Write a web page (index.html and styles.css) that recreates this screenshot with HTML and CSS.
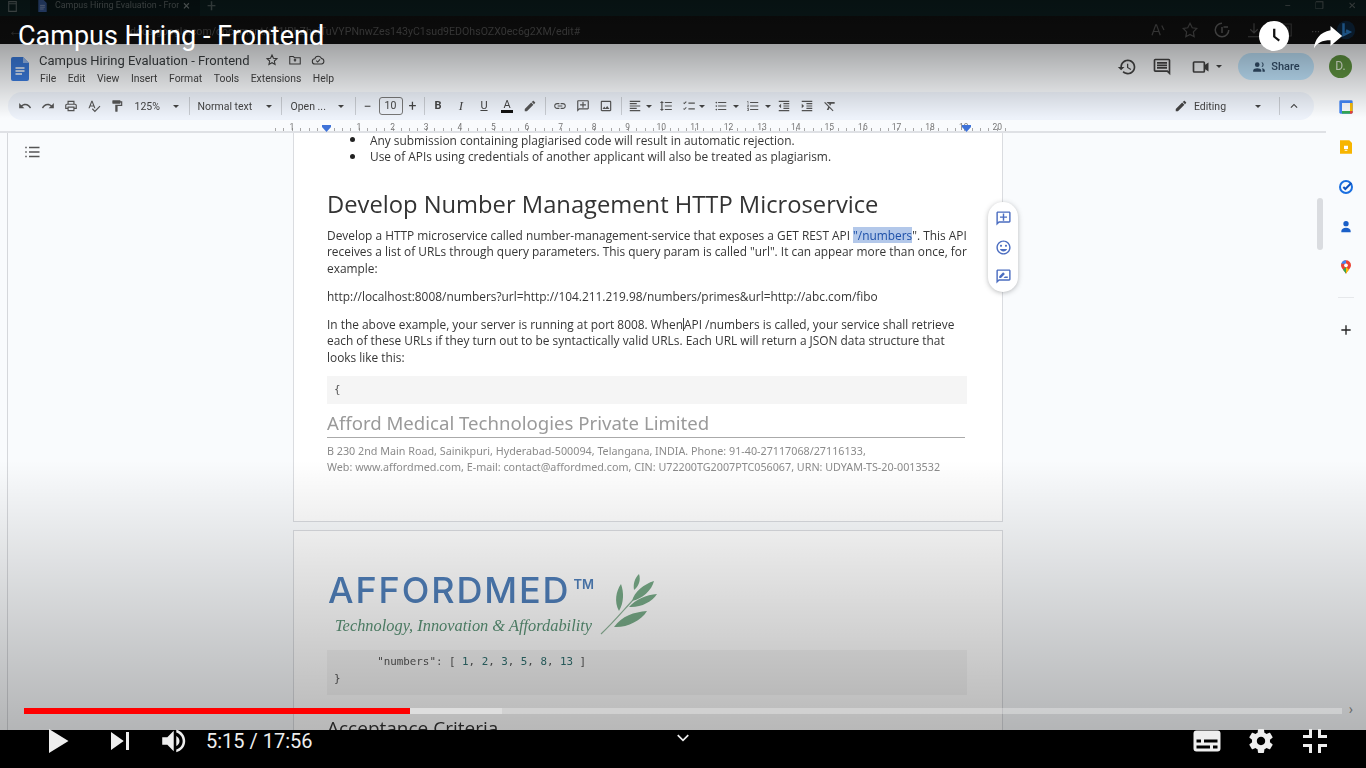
FILE: index.html
```html
<!DOCTYPE html>
<html lang="en">
<head>
<meta charset="utf-8">
<title>Campus Hiring - Frontend</title>
<link rel="stylesheet" href="styles.css">
</head>
<body>
<div class="player">
  <div class="video">
    <div class="tabstrip">
      <svg class="ws" viewBox="0 0 24 24"><path d="M5 3h14v18H5zM5 7h14" fill="none" stroke="#6b7777" stroke-width="2"/></svg>
      <div class="tab">
        <svg class="tabdoc" viewBox="0 0 16 20"><path d="M1 0h9l5 5v15H1z" fill="#3d63a8"/><path d="M4 9h8M4 12h8M4 15h6" stroke="#cfd9ee"/></svg>
        <span class="tabtext">Campus Hiring Evaluation - Fron</span>
        <span class="tabx">×</span>
      </div>
      <span class="tabplus">+</span>
      <div class="winctl"><span>–</span><span>❐</span><span>✕</span></div>
    </div>
    <div class="addr">
      <span class="addrnav">←</span>
      <span class="url">docs.google.com/document/d/1IRhZheiTuVYPNnwZes143yC1sud9EDOhsOZX0ec6g2XM/edit#</span>
      <div class="addricons">
        <svg viewBox="0 0 24 24"><path d="M4 19 9 5h1l5 14M6 14h7M17 6l3 6" fill="none" stroke="#555" stroke-width="1.6"/></svg>
        <svg viewBox="0 0 24 24"><path d="m12 3 3 6 6 1-4.500 4.500L17.500 21 12 18l-5.500 3 1-6.500L3 10l6-1z" fill="none" stroke="#555" stroke-width="1.600"/></svg>
        <svg viewBox="0 0 24 24"><path d="M12 3a9 9 0 1 0 9 9M14 8h6M12 8v8" fill="none" stroke="#666" stroke-width="2"/></svg>
        <svg viewBox="0 0 24 24"><path d="M12 3v12M7 11l5 5 5-5M4 21h16" fill="none" stroke="#555" stroke-width="1.600"/></svg>
        <svg viewBox="0 0 24 24"><path d="M5 4h14v16H5zM9 8h6v6H9z" fill="none" stroke="#444" stroke-width="1.600"/></svg>
      </div>
      <span class="addrmore">···</span>
      <svg class="bing" viewBox="0 0 24 24"><circle cx="12" cy="12" r="11" fill="#0f2a44"/><path d="M9 4v14l7-3.500-4-2 " fill="none" stroke="#2f86d6" stroke-width="3"/></svg>
    </div>

    <div class="docs">
      <div class="dochead">
        <svg class="doclogo" viewBox="0 0 18 24"><path d="M2 0h10l6 6v16a2 2 0 0 1-2 2H2a2 2 0 0 1-2-2V2a2 2 0 0 1 2-2z" fill="#3b7de0"/><path d="M12 0l6 6h-6z" fill="#9cc0f5"/><path d="M4.500 11h9M4.500 14h9M4.500 17h6.500" stroke="#fff" stroke-width="1.400"/></svg>
        <div class="docmeta">
          <div class="doctitlerow">
            <span class="doctitle">Campus Hiring Evaluation - Frontend</span>
            <svg class="i15 first" viewBox="0 0 24 24"><path d="m12 3.500 2.500 5.600 6 .6-4.500 4 1.300 6L12 16.600 6.700 19.700l1.300-6-4.500-4 6-.6z" fill="none" stroke="#444" stroke-width="1.800"/></svg>
            <svg class="i15" viewBox="0 0 24 24"><path d="M3 6h6l2 2h10v11H3zM12 15v-4M10 12.500l2-2 2 2" fill="none" stroke="#444" stroke-width="1.800"/></svg>
            <svg class="i15" viewBox="0 0 24 24"><path d="M7 19a4.500 4.500 0 0 1-.5-9A6 6 0 0 1 18 9.500 4.800 4.800 0 0 1 18 19zM9 13l2.500 2.500L15.500 11" fill="none" stroke="#444" stroke-width="1.800"/></svg>
          </div>
          <div class="menu"><span>File</span><span>Edit</span><span>View</span><span>Insert</span><span>Format</span><span>Tools</span><span>Extensions</span><span>Help</span></div>
        </div>
        <div class="headright">
          <svg class="i20" viewBox="0 0 24 24"><path d="M13 3c-4.970 0-9 4.030-9 9H1l3.890 3.890.07.140L9 12H6c0-3.870 3.130-7 7-7s7 3.130 7 7-3.130 7-7 7c-1.930 0-3.680-.79-4.940-2.060l-1.420 1.420C8.270 19.990 10.510 21 13 21c4.970 0 9-4.030 9-9s-4.030-9-9-9zm-1 5v5l4.280 2.540.72-1.210-3.500-2.080V8H12z"/></svg>
          <svg class="i20 hcomment" viewBox="0 0 24 24"><path d="M21.990 4c0-1.100-.89-2-1.990-2H4c-1.100 0-2 .9-2 2v12c0 1.100.9 2 2 2h14l4 4-.01-18zM20 4v13.170L18.830 16H4V4h16zM6 12h12v2H6zm0-3h12v2H6zm0-3h12v2H6z"/></svg>
          <svg class="i20 hvideo" viewBox="0 0 24 24"><path d="M4 6h11a1 1 0 0 1 1 1v10a1 1 0 0 1-1 1H4a1 1 0 0 1-1-1V7a1 1 0 0 1 1-1z" fill="none" stroke="#444" stroke-width="2"/><path d="m16 10 5-3.500v11L16 14z"/></svg>
          <span class="caret hcaret"></span>
          <div class="share">
            <svg class="i14" viewBox="0 0 24 24"><path d="M9 12a4 4 0 1 0 0-8 4 4 0 0 0 0 8zm0 2c-3 0-7 1.500-7 4v2h14v-2c0-2.500-4-4-7-4zm7-2a4 4 0 0 0 0-8 5.500 5.500 0 0 1 0 8zm2 8h4v-2c0-2-2-3.200-5-3.800 1 1 1 2.500 1 5.800z" fill="#334f6b"/></svg>
            <span>Share</span>
          </div>
          <div class="avatar">D.</div>
        </div>
      </div>

      <div class="workspace">
        <div class="editor">
          <div class="toolbar">
            <span class="tb"><svg viewBox="0 0 24 24"><path d="M12.500 8c-2.650 0-5.050.99-6.900 2.600L2 7v9h9l-3.620-3.620c1.390-1.160 3.160-1.880 5.120-1.880 3.540 0 6.550 2.310 7.600 5.500l2.370-.78C21.080 11.030 17.150 8 12.500 8z"/></svg></span>
            <span class="tb"><svg viewBox="0 0 24 24"><path d="M18.400 10.600C16.550 8.990 14.150 8 11.500 8c-4.650 0-8.580 3.030-9.960 7.220L3.900 16c1.050-3.190 4.050-5.500 7.600-5.500 1.950 0 3.730.72 5.120 1.880L13 16h9V7l-3.600 3.600z"/></svg></span>
            <span class="tb"><svg viewBox="0 0 24 24"><path d="M19 8h-1V3H6v5H5c-1.660 0-3 1.340-3 3v6h4v4h12v-4h4v-6c0-1.660-1.340-3-3-3zM8 5h8v3H8V5zm8 12v2H8v-4h8v2zm2-2v-2H6v2H4v-4c0-.55.45-1 1-1h14c.55 0 1 .45 1 1v4h-2z"/></svg></span>
            <span class="tb"><svg viewBox="0 0 24 24"><path d="M12.450 16h2.090L9.430 3H7.570L2.460 16h2.090l1.120-3h5.640l1.140 3zm-6.020-5L8.500 5.480 10.570 11H6.430zm15.160.59l-8.090 8.090L9.830 16l-1.410 1.410 5.090 5.090L23 13l-1.410-1.410z"/></svg></span>
            <span class="tb"><svg viewBox="0 0 24 24"><path d="M18 4V3c0-.55-.45-1-1-1H5c-.55 0-1 .45-1 1v4c0 .55.45 1 1 1h12c.55 0 1-.45 1-1V6h1v4H9v11c0 .55.45 1 1 1h2c.55 0 1-.45 1-1v-9h8V4h-3z"/></svg></span>
            <span class="tbtext zoomval">125%</span><span class="caret c-zoom"></span><span class="sep s-zoom"></span>
            <span class="tbtext styleval">Normal text</span><span class="caret c-style"></span><span class="sep s-style"></span>
            <span class="tbtext fontval">Open ...</span><span class="caret c-font"></span><span class="sep s-font"></span>
            <span class="tbglyph minus">−</span><span class="sizebox">10</span><span class="tbglyph plus">+</span><span class="sep s-size"></span>
            <span class="tb"><b class="fmt">B</b></span>
            <span class="tb"><i class="fmt fi">I</i></span>
            <span class="tb"><span class="fmt fu">U</span></span>
            <span class="tb"><span class="fmt fa">A</span></span>
            <span class="tb"><svg viewBox="0 0 24 24"><path d="M3 17.250V21h3.750L17.810 9.940l-3.750-3.750L3 17.250zM20.710 7.040c.39-.39.39-1.020 0-1.410l-2.340-2.340c-.39-.39-1.020-.39-1.410 0l-1.830 1.830 3.750 3.750 1.830-1.830z"/></svg></span>
            <span class="sep s-text"></span>
            <span class="tb"><svg viewBox="0 0 24 24"><path d="M3.900 12c0-1.710 1.390-3.100 3.100-3.100h4V7H7c-2.760 0-5 2.240-5 5s2.240 5 5 5h4v-1.900H7c-1.710 0-3.100-1.390-3.100-3.100zM8 13h8v-2H8v2zm9-6h-4v1.900h4c1.710 0 3.100 1.390 3.100 3.100s-1.390 3.100-3.100 3.100h-4V17h4c2.760 0 5-2.240 5-5s-2.240-5-5-5z"/></svg></span>
            <span class="tb"><svg viewBox="0 0 24 24"><path d="M20 2H4c-1.100 0-2 .9-2 2v18l4-4h14c1.100 0 2-.9 2-2V4c0-1.100-.9-2-2-2zm0 14H5.200L4 17.200V4h16v12zM11 5h2v4h4v2h-4v4h-2v-4H7V9h4z"/></svg></span>
            <span class="tb"><svg viewBox="0 0 24 24"><path d="M19 3H5c-1.100 0-2 .9-2 2v14c0 1.100.9 2 2 2h14c1.100 0 2-.9 2-2V5c0-1.100-.9-2-2-2zm0 16H5V5h14v14zm-5-7l-3 3.720L9 13l-3 4h12z"/></svg></span>
            <span class="sep s-ins"></span>
            <span class="tb"><svg viewBox="0 0 24 24"><path d="M3 3h18v2H3zM3 7h12v2H3zM3 11h18v2H3zM3 15h12v2H3zM3 19h18v2H3z"/></svg></span><span class="caret c-align"></span>
            <span class="tb"><svg viewBox="0 0 24 24"><path d="M6 7h2.500L5 3.500 1.500 7H4v10H1.500L5 20.500 8.500 17H6V7zm4-2v2h12V5H10zm0 14h12v-2H10v2zm0-6h12v-2H10v2z"/></svg></span>
            <span class="tb"><svg viewBox="0 0 24 24"><path d="m2 7 2 2 4-4-1.200-1.200L4 6.600 3.200 5.800zM2 17l2 2 4-4-1.200-1.200L4 16.600l-.8-.8zM11 6h11v2H11zM11 16h11v2H11z"/></svg></span><span class="caret c-check"></span>
            <span class="tb"><svg viewBox="0 0 24 24"><path d="M4 10.500c-.83 0-1.500.67-1.500 1.500s.67 1.500 1.500 1.500 1.500-.67 1.500-1.500-.67-1.500-1.500-1.500zm0-6c-.83 0-1.500.67-1.500 1.500S3.170 7.500 4 7.500 5.500 6.830 5.500 6 4.830 4.500 4 4.500zm0 12c-.83 0-1.500.68-1.500 1.500s.68 1.500 1.500 1.500 1.500-.68 1.500-1.500-.67-1.500-1.500-1.500zM7 19h14v-2H7v2zm0-6h14v-2H7v2zm0-8v2h14V5H7z"/></svg></span><span class="caret c-bul"></span>
            <span class="tb"><svg viewBox="0 0 24 24"><path d="M2 17h2v.5H3v1h1v.5H2v1h3v-4H2v1zm1-9h1V4H2v1h1v3zm-1 3h1.800L2 13.100v.9h3v-1H3.200L5 10.900V10H2v1zm5-6v2h14V5H7zm0 14h14v-2H7v2zm0-6h14v-2H7v2z"/></svg></span><span class="caret c-num"></span>
            <span class="tb"><svg viewBox="0 0 24 24"><path d="M11 17h10v-2H11v2zm-8-5l4 4V8l-4 4zm0 9h18v-2H3v2zM3 3v2h18V3H3zm8 6h10V7H11v2zm0 4h10v-2H11v2z"/></svg></span>
            <span class="tb"><svg viewBox="0 0 24 24"><path d="M3 21h18v-2H3v2zM3 8v8l4-4-4-4zm8 9h10v-2H11v2zM3 3v2h18V3H3zm8 6h10V7H11v2zm0 4h10v-2H11v2z"/></svg></span>
            <span class="tb"><svg viewBox="0 0 24 24"><path d="M3.270 5 2 6.270l6.970 6.970L6.500 19h3l1.570-3.660L16.730 21 18 19.730 3.550 5.270 3.270 5zM6 5v.18L8.820 8h2.400l-.72 1.680 2.100 2.100L14.210 8H20V5H6z"/></svg></span>
            <div class="tbend">
              <svg class="i14" viewBox="0 0 24 24"><path d="M3 17.250V21h3.750L17.810 9.940l-3.750-3.750L3 17.250zM20.710 7.040c.39-.39.39-1.020 0-1.410l-2.340-2.340c-.39-.39-1.020-.39-1.410 0l-1.830 1.830 3.750 3.750 1.830-1.830z"/></svg>
              <span class="tbtext editing">Editing</span><span class="caret c-edit"></span><span class="sep s-edit"></span>
              <svg class="i14 up" viewBox="0 0 24 24"><path d="M7.410 15.410 12 10.830l4.590 4.580L18 14l-6-6-6 6z"/></svg>
            </div>
          </div>

          <div class="ruler">
            <span>1</span><span></span><span>1</span><span>2</span><span>3</span><span>4</span><span>5</span><span>6</span><span>7</span><span>8</span><span>9</span><span>10</span><span>11</span><span>12</span><span>13</span><span>14</span><span>15</span><span>16</span><span>17</span><span>18</span><span>19</span><span>20</span>
            <i class="mark mark-l"></i><i class="mark mark-r"></i>
          </div>

          <div class="canvas">
            <div class="outline">
              <svg class="i18" viewBox="0 0 24 24"><path d="M3 5h2v2H3zM8 5h14v2H8zM3 11h2v2H3zM8 11h14v2H8zM3 17h2v2H3zM8 17h14v2H8z" fill="#555"/></svg>
            </div>
            <div class="pages">
              <section class="page page-one">
                <ul class="rules">
                  <li>Any submission containing plagiarised code will result in automatic rejection.</li>
                  <li>Use of APIs using credentials of another applicant will also be treated as plagiarism.</li>
                </ul>
                <h1>Develop Number Management HTTP Microservice</h1>
                <p>Develop a HTTP microservice called number-management-service that exposes a GET REST API <span class="sel">"/numbers</span>". This API<br>receives a list of URLs through query parameters. This query param is called "url". It can appear more than once, for<br>example:</p>
                <p>http://localhost:8008/numbers?url=http://104.211.219.98/numbers/primes&amp;url=http://abc.com/fibo</p>
                <p class="lastp">In the above example, your server is running at port 8008. When<i class="cursor"></i>API /numbers is called, your service shall retrieve<br>each of these URLs if they turn out to be syntactically valid URLs. Each URL will return a JSON data structure that<br>looks like this:</p>
                <pre class="code code-a">{</pre>
                <div class="foot-title">Afford Medical Technologies Private Limited</div>
                <div class="foot-text">B 230 2nd Main Road, Sainikpuri, Hyderabad-500094, Telangana, INDIA. Phone: 91-40-27117068/27116133,<br>Web: www.affordmed.com, E-mail: contact@affordmed.com, CIN: U72200TG2007PTC056067, URN: UDYAM-TS-20-0013532</div>
              </section>
              <section class="page page-two">
                <div class="logo">
                  <div class="logotext">
                    <div class="brand">AFFORDMED<sup>TM</sup></div>
                    <div class="tagline">Technology, Innovation &amp; Affordability</div>
                  </div>
                  <svg class="leaf" viewBox="0 0 60 62"><path d="M1 60C12 50 22 38 33 26" fill="none" stroke="#8fb59a" stroke-width="1.200"/><path d="M14 53C22 42 34 38 47 37 41 47 26 54 14 53zM29 33C36 25 46 21 57 20 52 28 40 34 29 33zM32 27C34 18 44 10 54 7 52 16 42 25 32 27zM34 16C33 9 35 4 39 0 41 6 39 12 34 16zM19 37C14 28 16 17 21 10 24 18 24 29 19 37z" fill="#78ab88"/></svg>
                </div>
                <pre class="code code-b">      <span class="ind">"numbers": [ <em>1</em>, <em>2</em>, <em>3</em>, <em>5</em>, <em>8</em>, <em>13</em> ]</span>
}</pre>
                <h2>Acceptance Criteria</h2>
              </section>
            </div>
            <div class="scrollarea"><div class="thumb"></div></div>
            <div class="actions">
              <svg viewBox="0 0 24 24"><path d="M20 2H4c-1.100 0-2 .9-2 2v18l4-4h14c1.100 0 2-.9 2-2V4c0-1.100-.9-2-2-2zm0 14H5.200L4 17.200V4h16v12zM11 5h2v4h4v2h-4v4h-2v-4H7V9h4z"/></svg>
              <svg viewBox="0 0 24 24"><path d="M11.990 2C6.470 2 2 6.480 2 12s4.470 10 9.990 10C17.520 22 22 17.520 22 12S17.520 2 11.990 2zM12 20c-4.420 0-8-3.580-8-8s3.580-8 8-8 8 3.580 8 8-3.580 8-8 8zm3.500-9c.83 0 1.500-.67 1.500-1.500S16.330 8 15.500 8 14 8.670 14 9.500s.67 1.500 1.500 1.500zm-7 0c.83 0 1.500-.67 1.500-1.500S9.330 8 8.500 8 7 8.670 7 9.500 7.670 11 8.500 11zm3.500 6.500c2.330 0 4.310-1.460 5.110-3.500H6.890c.8 2.040 2.780 3.500 5.110 3.500z"/></svg>
              <svg viewBox="0 0 24 24"><path d="M20 2H4c-1.100 0-2 .9-2 2v18l4-4h14c1.100 0 2-.9 2-2V4c0-1.100-.9-2-2-2zm0 14H5.200L4 17.200V4h16v12zM6 14v-2.500l5.500-5.500 2.500 2.500L8.500 14zM12 14h6v-2h-4z"/></svg>
            </div>
          </div>
        </div>

        <aside class="rail">
          <svg class="r-cal" viewBox="0 0 24 24"><rect x="2" y="2" width="20" height="20" rx="2" fill="#4285f4"/><rect x="6" y="6" width="12" height="12" fill="#f7f9fc"/><path d="M18 18h4v2a2 2 0 0 1-2 2h-2z" fill="#ea4335"/><path d="M6 18h12v4H6z" fill="#34a853"/><path d="M18 6h4v12h-4z" fill="#fbbc04"/></svg>
          <svg viewBox="0 0 24 24"><path d="M3 2h14l4 4v16H3z" fill="#f7b500"/><path d="M9 10h6v5H9zM10 16h4v1.500h-4z" fill="#fff"/></svg>
          <svg viewBox="0 0 24 24"><circle cx="12" cy="12" r="9" fill="none" stroke="#1a6fe0" stroke-width="3"/><path d="m8 12 3 3 9-9" fill="none" stroke="#0d52bf" stroke-width="3"/></svg>
          <svg viewBox="0 0 24 24"><circle cx="12" cy="7" r="4" fill="#1a5fc8"/><path d="M5 20v-2c0-3 3-5 7-5s7 2 7 5v2z" fill="#1a5fc8"/></svg>
          <svg viewBox="0 0 24 24"><path d="M12 2a7.500 7.500 0 0 0-7.500 7.500C4.500 14 9 17 12 22c3-5 7.500-8 7.500-12.500A7.500 7.500 0 0 0 12 2z" fill="#ea4335"/><path d="M12 22c-1-2-3-4-4.500-6L12 12z" fill="#34a853"/><path d="M12 22c1-2 3-4 4.500-6L12 12z" fill="#fbbc04"/><path d="M5 7a7.500 7.500 0 0 1 7-5v5z" fill="#4285f4"/><circle cx="12" cy="9.500" r="2.800" fill="#fff"/></svg>
          <hr class="raildiv">
          <svg class="r-plus" viewBox="0 0 24 24"><path d="M19 13h-6v6h-2v-6H5v-2h6V5h2v6h6z" fill="#222"/></svg>
        </aside>
      </div>
    </div>

    <div class="shade shade-top"></div>
    <div class="shade shade-bottom"></div>
    <div class="vtitle">Campus Hiring - Frontend</div>
    <div class="clock"><svg viewBox="0 0 24 24"><path d="M11 4h2.500v8.200l5 4-1.500 1.800-6-4.800z" fill="#111"/></svg></div>
    <svg class="sharearrow" viewBox="0 0 36 36"><path d="M21 6 35 18 21 30v-7C11 23 5 26 1 33c1-10 7-20 20-22z" fill="#fff"/></svg>
  </div>

  <div class="controls">
    <div class="progress">
      <div class="played"></div><div class="buffered"></div><div class="rest"></div>
      <span class="storyend">›</span>
    </div>
    <div class="ctlrow">
      <svg class="yt" viewBox="0 0 36 36"><path d="M12 26 18.500 22V14L12 10zM18.500 22 25 18 18.500 14z"/></svg>
      <svg class="yt ytnext" viewBox="0 0 36 36"><path d="M12 24 20.500 18 12 12zM22 12v12h2V12z"/></svg>
      <svg class="yt ytvol" viewBox="0 0 36 36"><path d="M8 21H12L17 26V10L12 15H8ZM19 14V22C20.480 21.320 21.500 19.770 21.500 18 21.500 16.260 20.480 14.740 19 14ZM19 11.290C21.890 12.150 24 14.830 24 18 24 21.170 21.890 23.850 19 24.710V26.770C23.010 25.860 26 22.280 26 18 26 13.720 23.010 10.140 19 9.230Z"/></svg>
      <span class="time">5:15 / 17:56</span>
      <svg class="chev" viewBox="0 0 24 24"><path d="m3 7 9 9 9-9" fill="none" stroke="#eee" stroke-width="3"/></svg>
      <svg class="yt" viewBox="0 0 36 36"><path fill-rule="evenodd" d="M11 11h14a2 2 0 0 1 2 2v10a2 2 0 0 1-2 2H11a2 2 0 0 1-2-2V13a2 2 0 0 1 2-2zM11 17v2h3v-2zM16 17v2h9v-2zM11 21v2h9v-2zM22 21v2h3v-2z"/></svg>
      <svg class="yt" viewBox="0 0 36 36"><path d="m23.940 18.780c.03-.25.05-.51.05-.78 0-.27-.02-.52-.05-.78l1.680-1.320c.15-.12.19-.33.09-.51l-1.600-2.760c-.09-.17-.31-.24-.48-.17l-1.990.8c-.41-.32-.86-.58-1.350-.78l-.3-2.120c-.02-.19-.19-.33-.39-.33h-3.200c-.2 0-.36.14-.39.33l-.3 2.120c-.48.2-.93.47-1.350.78l-1.990-.8c-.18-.07-.39 0-.48.17l-1.600 2.760c-.1.17-.05.39.09.51l1.680 1.320c-.03.25-.05.52-.05.78 0 .26.02.52.05.78l-1.680 1.320c-.15.12-.19.33-.09.51l1.600 2.760c.09.17.31.24.48.17l1.990-.8c.41.32.86.58 1.350.78l.3 2.120c.02.19.19.33.39.33h3.200c.2 0 .36-.14.39-.33l.3-2.120c.48-.2.93-.47 1.350-.78l1.990.8c.18.07.39 0 .48-.17l1.600-2.760c.09-.17.05-.39-.09-.51zm-5.940 2.010c-1.540 0-2.800-1.250-2.800-2.800 0-1.540 1.250-2.800 2.800-2.800 1.540 0 2.800 1.250 2.800 2.800 0 1.540-1.250 2.800-2.800 2.800z"/></svg>
      <svg class="yt" viewBox="0 0 36 36"><path d="M14 14h-4v2h6v-6h-2zM22 14v-4h-2v6h6v-2zM20 26h2v-4h4v-2h-6zM10 22h4v4h2v-6h-6z"/></svg>
    </div>
  </div>
</div>
</body>
</html>
```
FILE: styles.css
```css
* { box-sizing: border-box; }
html, body { margin: 0; padding: 0; width: 1366px; height: 768px; overflow: hidden; background: #000; }
body { font-family: "Open Sans", "Noto Sans", sans-serif; color: #333; }
svg { display: block; flex: none; }

.player { width: 1366px; height: 768px; display: flex; flex-direction: column; position: relative; background: #000; }
.video { height: 730px; flex: none; display: flex; flex-direction: column; position: relative; overflow: hidden; background: #f9fbfd; }

/* browser chrome */
.tabstrip { height: 16px; flex: none; background: #0e2324; display: flex; align-items: flex-start; color: #667; overflow: hidden; filter: blur(.35px); }
.ws { width: 13px; height: 13px; margin-left: 6px; }
.tab { width: 170px; height: 16px; margin-left: 11px; background: #0b1a1c; display: flex; align-items: flex-start; padding-left: 7px; }
.tabdoc { width: 11px; height: 12px; }
.tabtext { font: 8.900px/11px "Roboto", sans-serif; color: #6d7777; margin-left: 7px; width: 124px; white-space: nowrap; overflow: hidden; }
.tabx { font: 13px/11px "Roboto", sans-serif; color: #8a9494; margin-left: 4px; }
.tabplus { font: 16px/11px "Roboto", sans-serif; color: #5d6c6c; margin-left: 7px; }
.winctl { margin-left: auto; display: flex; gap: 24px; padding-right: 10px; font: 10px/11px "Roboto", sans-serif; color: #66706f; }
.addr { height: 28px; flex: none; background: #121212; display: flex; align-items: center; padding-left: 8px; filter: blur(.35px); }
.addrnav { color: #444; font-size: 16px; width: 122px; }
.url { font: 10.600px "Roboto", sans-serif; color: #565656; white-space: nowrap; width: 480px; margin-top: 2px; }
.addricons { margin-left: auto; display: flex; gap: 14px; }
.addricons svg { width: 18px; height: 18px; }
.addrmore { color: #666; font-size: 11px; margin-left: 16px; }
.bing { width: 20px; height: 20px; margin: 0 10px 0 16px; }

/* docs header */
.docs { flex: 1; min-height: 0; display: flex; flex-direction: column; filter: blur(.35px); }
.dochead { height: 48px; flex: none; display: flex; align-items: flex-start; padding: 13px 0 0 11px; }
.doclogo { width: 18px; height: 24px; }
.docmeta { margin-left: 10px; }
.doctitlerow { display: flex; align-items: center; height: 18px; margin-top: -6px; }
.doctitle { font: 13px "Roboto", sans-serif; color: #3c4043; white-space: nowrap; width: 212px; }
.i15 { width: 14px; height: 14px; margin-right: 9px; fill: #444; }
.i15.first { margin-left: 14px; }
.menu { display: flex; gap: 11.500px; font: 10.400px "Roboto", sans-serif; color: #444; margin-top: 3px; padding-left: 1px; }
.headright { margin-left: auto; display: flex; align-items: center; height: 27px; margin-top: -4px; }
.i20 { width: 20px; height: 20px; fill: #444; margin-left: -1px; }
.hcomment { margin-left: 15px; }
.hvideo { margin-left: 19px; }
.hcaret { margin-left: 5px; }
.share { width: 76px; height: 27px; margin-left: 16px; border-radius: 14px; background: #c2e7ff; display: flex; align-items: center; justify-content: center; gap: 5px; font: 500 11px "Roboto", sans-serif; color: #334f6b; }
.avatar { width: 23px; height: 23px; margin: 0 14px 0 15px; border-radius: 50%; background: #5f9440; color: #e6f0dd; font: 12px/23px "Roboto", sans-serif; text-align: center; }
.i14 { width: 14px; height: 14px; fill: #444; }

/* toolbar */
.workspace { flex: 1; min-height: 0; display: flex; }
.editor { width: 1326px; flex: none; display: flex; flex-direction: column; position: relative; }
.toolbar { height: 28px; flex: none; margin: 0 12px 0 8px; padding-left: 5.500px; background: #edf2fa; border-radius: 14px; display: flex; align-items: center; }
.tb { width: 23px; height: 28px; flex: none; display: flex; align-items: center; justify-content: center; }
.tb svg { width: 14px; height: 14px; fill: #555; }
.tbtext { font: 10.500px "Roboto", sans-serif; color: #444; white-space: nowrap; }
.caret { width: 0; height: 0; flex: none; border-left: 3px solid transparent; border-right: 3px solid transparent; border-top: 3.500px solid #444; }
.sep { width: 1px; height: 18px; flex: none; background: #c7cbd1; }
.zoomval { width: 26px; margin-left: 6px; }
.c-zoom { margin-left: 12px; }
.s-zoom { margin-left: 10px; }
.styleval { width: 56px; margin-left: 8px; }
.c-style { margin-left: 12px; }
.s-style { margin-left: 9px; }
.fontval { width: 37px; margin-left: 9px; }
.c-font { margin-left: 10px; }
.s-font { margin-left: 11px; }
.tbglyph { width: 12px; text-align: center; font: 14px "Roboto", sans-serif; color: #444; }
.minus { margin-left: 6px; }
.sizebox { width: 24px; height: 18px; margin-left: 5px; border: 1px solid #777; border-radius: 3px; text-align: center; font: 10.500px/16px "Roboto", sans-serif; color: #444; }
.plus { margin-left: 4px; }
.s-size { margin-left: 5px; margin-right: 2px; }
.fmt { font-size: 11px; font-family: "Roboto", sans-serif; color: #444; line-height: 14px; }
.fi { font-family: "Liberation Serif", serif; font-size: 13px; }
.fu { text-decoration: underline; }
.fa { border-bottom: 3px solid #111; line-height: 11px; padding: 0 2px; }
.s-text { margin: 0 3px; }
.s-ins { margin: 0 2px 0 3px; }
.c-align { margin: 0 3px 0 -1px; }
.c-check { margin: 0 5px 0 -2px; }
.c-bul { margin: 0 2.500px 0 .5px; }
.c-num { margin: 0 1.500px 0 .5px; }
.tbend { margin-left: auto; display: flex; align-items: center; }
.editing { margin-left: 6px; width: 33px; }
.c-edit { margin-left: 28px; }
.s-edit { margin-left: 18px; }
.up { margin: 0 13px 0 7px; }

/* ruler */
.ruler { height: 13px; flex: none; display: flex; padding-left: 275px; font: 8.500px/14px "Roboto", sans-serif; color: #777; border-bottom: 2px solid #dfe1e5; position: relative; }
.ruler span { width: 33.600px; flex: none; text-align: center; height: 11px;
  background: repeating-linear-gradient(90deg, #a8a8a8 0 1px, transparent 1px 8.400px) 0 100% / 100% 3px no-repeat; }
.mark { position: absolute; top: 5px; width: 9px; height: 7px; background: #3f73d8; clip-path: polygon(0 0, 100% 0, 100% 30%, 50% 100%, 0 30%); }
.mark-l { left: 322px; }
.mark-r { left: 962px; }

/* canvas */
.canvas { flex: 1; min-height: 0; display: flex; overflow: hidden; position: relative; }
.outline { width: 293px; flex: none; padding: 10px 0 0 23px;
  background: linear-gradient(#d5d7db, #d5d7db) 7px 0 / 1px 100% no-repeat; }
.i18 { width: 18px; height: 18px; }
.pages { width: 710px; flex: none; margin-top: -2px; display: flex; flex-direction: column; gap: 8px; }
.page { background: #fff; border: 1px solid #dadce0; border-top: 0; padding: 0 35px 0 33px; flex: none; color: #363636; }
.page-one { height: 391px; }
.page-two { border-top: 1px solid #dadce0; height: 300px; padding-top: 38px; }
.rules { margin: .5px 0 0; padding: 0 0 0 43px; list-style: none; font-size: 11.900px; line-height: 16.500px; white-space: nowrap; }
.rules li { display: flex; align-items: center; }
.rules li::before { content: ""; width: 5px; height: 5px; flex: none; border-radius: 50%; background: #222; margin: 0 15px 0 -20px; }
h1 { font-size: 23.740px; font-weight: 400; line-height: 32px; margin: 23.500px 0 6.500px; color: #333; white-space: nowrap; }
p { margin: 0 0 11.500px; font-size: 11.900px; line-height: 16.500px; white-space: nowrap; }
.lastp { margin-bottom: 11px; }
.sel { background: #b3c8ea; color: #1c4fa8; }
.cursor { display: inline-block; width: 1px; height: 13px; background: #444; vertical-align: -2px; }
.code { margin: 0; background: #f5f5f5; font: 10.850px/16.500px "DejaVu Sans Mono", monospace; color: #555; }
.code em { font-style: normal; color: #2f6f6f; }
.ind { margin-left: 4px; }
.code-a { height: 28px; padding: 6px 7px; }
.foot-title { margin-top: 7px; font: 18.600px/24px "Noto Sans", sans-serif; color: #9a9a9a; white-space: nowrap; }
.foot-text { margin-top: 2px; border-top: 1px solid #aaa; padding-top: 5px; font: 10.750px/16px "Noto Sans", sans-serif; color: #8b8b8b; white-space: nowrap; margin-right: 2px; }

.logo { display: flex; height: 81px; margin-left: 1px; }
.logotext { width: 272px; }
.brand { font: 500 36px/34px "Inter", sans-serif; letter-spacing: 1.900px; color: #5080bb; white-space: nowrap; margin-top: 4px; }
.brand sup { font-size: 13px; font-weight: 600; vertical-align: 14px; line-height: 0; letter-spacing: 0; margin-left: 3px; }
.tagline { margin: 7px 0 0 7px; font: italic 16.400px/24px "Liberation Serif", serif; color: #5a9376; white-space: nowrap; }
.leaf { width: 60px; height: 62px; margin-top: 5px; }
.code-b { height: 45px; padding: 4px 9px 4px 7px; }
h2 { font-size: 19px; font-weight: 400; line-height: 26px; margin: 20px 0 0; color: #333; white-space: nowrap; }

.scrollarea { flex: 1; display: flex; justify-content: flex-end; padding: 65px 3px 0 0; }
.thumb { width: 6px; height: 52px; border-radius: 3px; background: #dadce0; }
.actions { position: absolute; left: 988px; top: 69px; width: 30px; height: 90px; border-radius: 15px; background: #fff; box-shadow: 0 1px 5px rgba(60,64,67,.35); display: flex; flex-direction: column; align-items: center; gap: 12px; padding-top: 7.500px; }
.actions svg { width: 17px; height: 17px; fill: #4a6cc0; }

.rail { flex: 1; display: flex; flex-direction: column; align-items: center; padding: 7px 0 0; gap: 24px; }
.rail svg { width: 16px; height: 16px; }
.raildiv { width: 16px; border: 0; border-top: 1px solid #e6e8eb; margin: -2px 0 0; }

/* overlays on the video */
.shade { position: absolute; left: 0; right: 0; pointer-events: none; }
.shade-top { top: 0; height: 118px; background: linear-gradient(rgba(0,0,0,.5) 0, rgba(0,0,0,.34) 38%, rgba(0,0,0,0) 100%); }
.shade-bottom { bottom: 0; height: 270px; background: linear-gradient(rgba(0,0,0,0), rgba(0,0,0,.28)); }
.vtitle { position: absolute; left: 18px; top: 18px; font: 27px/36px "Roboto", sans-serif; color: #fff; white-space: nowrap; }
.clock { position: absolute; left: 1259px; top: 21px; width: 30px; height: 30px; border-radius: 50%; background: #fff; padding: 4px; }
.sharearrow { position: absolute; left: 1313px; top: 21px; width: 30px; height: 30px; }

/* player controls */
.controls { position: absolute; left: 0; right: 0; bottom: 0; display: flex; flex-direction: column; }
.progress { height: 6px; margin: 0 24px; display: flex; position: relative; }
.played { width: 386px; background: #f00; }
.buffered { width: 92px; background: #dedede; }
.rest { flex: 1; background: rgba(255,255,255,.3); }
.storyend { position: absolute; right: -11px; top: -7px; font: 14px "Roboto", sans-serif; color: #666; }
.ctlrow { height: 54px; display: flex; align-items: center; padding: 0 24px 0 31px; color: #eee; }
.yt { width: 54px; height: 54px; fill: #eee; }
.ytnext { margin-left: 8px; }
.ytvol { width: 46px; height: 46px; margin-left: 5px; }
.time { font: 20px "Roboto", sans-serif; margin-left: 8px; color: #eee; white-space: nowrap; }
.chev { width: 14px; height: 14px; margin: -7px 490px 0 auto; }
```
